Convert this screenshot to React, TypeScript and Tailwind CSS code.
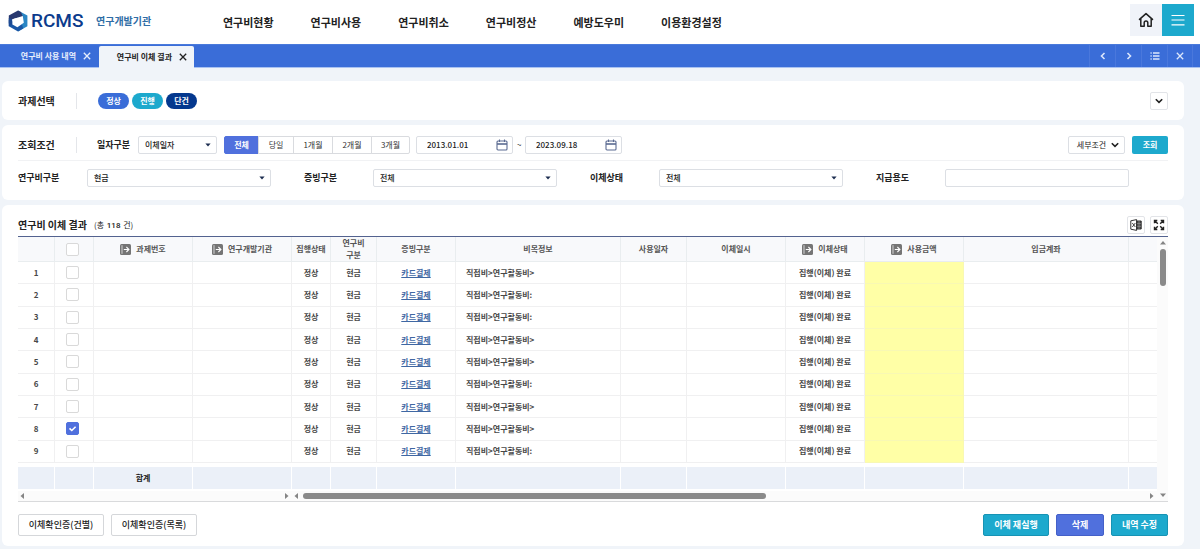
import { useState, type ReactNode } from "react";

const NAV = ["연구비현황", "연구비사용", "연구비취소", "연구비정산", "예방도우미", "이용환경설정"];
const PERIODS = ["전체", "당일", "1개월", "2개월", "3개월"];
const ITEM_TEXTS = [
  "직접비>연구활동비>",
  "직접비>연구활동비:",
  "직접비>연구활동비:",
  "직접비>연구활동비>",
  "직접비>연구활동비>",
  "직접비>연구활동비:",
  "직접비>연구활동비>",
  "직접비>연구활동비>",
  "직접비>연구활동비:",
];

function Logo() {
  return (
    <svg viewBox="0 0 20 22" className="h-[22px] w-5 shrink-0" aria-hidden="true">
      <path d="M10 0.6 19.4 5.4V16.2L10 21.4z" fill="#2a86c4" />
      <path d="M10 0.6 0.8 5.4V13.5L4.4 9.2 14.8 6.4 13 2.1z" fill="#28386f" />
      <path d="M0.8 10V16.2L10 21.4 15.2 18.5 14 14.5z" fill="#1a57a6" />
      <path d="M0.8 8 4.4 9.2V14.2L0.8 16.2z" fill="#1d4a93" />
      <path d="M4.4 9.2 14.8 6 15.8 12.8 9.4 17.2 4.4 14.4z" fill="#fff" />
    </svg>
  );
}

function Chevron({ dir, className }: { dir: "left" | "right" | "down"; className: string }) {
  const d = { left: "M6.5 2 3.5 5l3 3", right: "M3.5 2l3 3-3 3", down: "M1.8 3.2 5 6.4l3.2-3.2" }[dir];
  return (
    <svg viewBox="0 0 10 10" className={className} fill="none" stroke="currentColor" strokeWidth="1.6" aria-hidden="true">
      <path d={d} />
    </svg>
  );
}

function Cross({ className }: { className: string }) {
  return (
    <svg viewBox="0 0 10 10" className={className} fill="none" stroke="currentColor" strokeWidth="1.3" aria-hidden="true">
      <path d="M1.8 1.8l6.4 6.4M8.2 1.8 1.8 8.2" />
    </svg>
  );
}

function Triangle({ dir }: { dir: "left" | "right" | "up" | "down" }) {
  const d = { left: "M5 1v6L1.5 4z", right: "M3 1v6l3.5-3z", up: "M1 5.5h6L4 2z", down: "M1 2.5h6L4 6z" }[dir];
  return (
    <svg viewBox="0 0 8 8" className="size-2 shrink-0" aria-hidden="true">
      <path d={d} fill="#858585" />
    </svg>
  );
}

function CalendarIcon() {
  return (
    <svg viewBox="0 0 12 12" className="size-3 shrink-0" fill="none" stroke="#5b6b92" strokeWidth="1.1" aria-hidden="true">
      <rect x="1" y="2" width="10" height="9" rx="1" />
      <path d="M1 5h10" strokeWidth="1.6" />
      <path d="M3.5 0.5v2.5M8.5 0.5v2.5" />
    </svg>
  );
}

function LinkIcon() {
  return (
    <svg viewBox="0 0 11 11" className="size-[11px] shrink-0" aria-hidden="true">
      <rect width="11" height="11" rx="1.5" fill="#757575" />
      <path d="M2 1.2v8.6" stroke="#d4d4d4" strokeWidth="1" />
      <path d="M3.8 5.5h5M6.4 3l2.5 2.5L6.4 8" fill="none" stroke="#fff" strokeWidth="1.1" />
    </svg>
  );
}

function Dropdown({ label, value, className }: { label: string; value: string; className: string }) {
  return (
    <span className={`relative block ${className}`}>
      <select
        aria-label={label}
        defaultValue={value}
        className="block h-full w-full appearance-none rounded-xs border border-[#dcdfe4] bg-white pl-1.5 text-[8px] leading-[14px] font-medium text-[#222]"
      >
        <option>{value}</option>
      </select>
      <svg viewBox="0 0 6 4" className="pointer-events-none absolute top-1/2 right-1.5 h-1 w-1.5 -translate-y-1/2" aria-hidden="true">
        <path d="M0.4 0.4h5.2L3 3.6z" fill="#1c2d50" />
      </svg>
    </span>
  );
}

function DateField({ label, value }: { label: string; value: string }) {
  return (
    <label className="flex h-[18px] w-[97px] items-center rounded-xs border border-[#dcdfe4] bg-white pr-1 pl-2.5">
      <input aria-label={label} defaultValue={value} className="min-w-0 flex-1 bg-transparent text-[8px] leading-[14px] font-medium text-[#222] outline-none" />
      <CalendarIcon />
    </label>
  );
}

function Tick({ label, checked, onChange }: { label: string; checked: boolean; onChange: () => void }) {
  return (
    <span className="relative mr-auto ml-[11px] block size-[13px]">
      <input
        type="checkbox"
        aria-label={label}
        checked={checked}
        onChange={onChange}
        className="block size-[13px] appearance-none rounded-xs border border-[#d9d9d9] bg-white checked:border-[#5070dd] checked:bg-[#5070dd]"
      />
      {checked && (
        <svg viewBox="0 0 13 13" className="pointer-events-none absolute inset-0" fill="none" stroke="#fff" strokeWidth="1.6" aria-hidden="true">
          <path d="M3.5 6.3l2.3 2.2 3.8-3.8" />
        </svg>
      )}
    </span>
  );
}

function Head({ children, linked }: { children?: ReactNode; linked?: boolean }) {
  return (
    <th scope="col" className="border-r border-b border-[#e9edef] bg-[#f8f9fb] p-0 font-bold text-[#555] last:border-r-0">
      <span className="flex items-center justify-center gap-[5px]">
        {linked && <LinkIcon />}
        {children}
      </span>
    </th>
  );
}

function Cell({ children, className = "border-[#f0f0f1] text-center" }: { children?: ReactNode; className?: string }) {
  return <td className={`border-r border-b p-0 last:border-r-0 ${className}`}>{children}</td>;
}

function Panel({ children, className }: { children: ReactNode; className: string }) {
  return <section className={`rounded-md bg-white px-4 ${className}`}>{children}</section>;
}

const iconButton = "grid size-[18px] place-items-center rounded-xs border border-[#e2e4e8] bg-white text-[#222]";
const solidButton = "h-[22px] rounded-xs border text-[9px] font-bold text-white";
const barButton = "grid w-[26px] place-items-center border-l border-[#4a78dc] text-[#dbe6fb]";

export default function App() {
  const [period, setPeriod] = useState("전체");
  const [selected, setSelected] = useState<number[]>([8]);
  const toggle = (n: number) => setSelected((s) => (s.includes(n) ? s.filter((v) => v !== n) : [...s, n]));
  const all = selected.length === ITEM_TEXTS.length;

  return (
    <div className="min-h-screen bg-[#f0f4f9] font-['Noto_Sans_CJK_KR','Noto_Sans',sans-serif] text-[8px] leading-3 text-[#222]">
      <header className="flex h-11 items-center bg-white pr-1.5 pl-2">
        <a href="#home" className="flex w-[76px] items-center gap-[3px] pb-[3px] font-[Roboto,sans-serif] text-[19px] leading-6 font-medium text-[#0b3b8c]">
          <Logo />
          RCMS
        </a>
        <span className="ml-3 w-[58px] pb-[3px] text-[10px] leading-4 font-bold whitespace-nowrap text-[#2f6da6]">연구개발기관</span>
        <nav className="ml-[69px] flex flex-1 gap-[37px] text-[11px] leading-4 font-bold text-[#222]">
          {NAV.map((n) => (
            <a key={n} href="#menu" className="whitespace-nowrap">
              {n}
            </a>
          ))}
        </nav>
        <div className="flex pb-1">
          <button aria-label="홈" className="grid size-8 place-items-center bg-[#f0f3f9]">
            <svg viewBox="0 0 16 16" className="size-4" fill="none" stroke="#222" strokeWidth="1.5" strokeLinejoin="round" strokeLinecap="round" aria-hidden="true">
              <path d="M1.5 7.4 8 1.6l6.5 5.8M2.8 6.6v7.6h3.4v-3.4a1.8 1.8 0 0 1 3.6 0v3.4h3.4V6.6" />
            </svg>
          </button>
          <button aria-label="전체 메뉴" className="grid size-8 place-items-center bg-[#1da9cd]">
            <svg viewBox="0 0 14 12" className="h-3 w-3.5" stroke="#fff" strokeWidth="1.2" aria-hidden="true">
              <path d="M0.5 1.5h13M0.5 6h13M0.5 10.8h13" />
            </svg>
          </button>
        </div>
      </header>

      <div className="flex h-6 items-stretch justify-between border-t border-b border-t-[#4a7adb] border-b-[#a9c2f1] bg-[#3a6dd8] pr-[7px]">
        <div className="flex items-end">
          <div className="flex h-[22px] w-[99px] items-center justify-end gap-1.5 pr-[7px] text-[#e6eefc]">
            <a href="#tab1" className="font-bold">연구비 사용 내역</a>
            <button aria-label="연구비 사용 내역 닫기">
              <Cross className="size-2.5" />
            </button>
          </div>
          <div className="-mb-px flex h-[22px] w-[95px] items-center justify-end gap-1.5 rounded-t-xs bg-[#f0f4f9] pr-1.5 text-[#222]">
            <a href="#tab2" className="font-bold">연구비 이체 결과</a>
            <button aria-label="연구비 이체 결과 닫기">
              <Cross className="size-2.5" />
            </button>
          </div>
        </div>
        <div className="flex">
          <button aria-label="이전 탭" className={barButton}>
            <Chevron dir="left" className="size-2.5" />
          </button>
          <button aria-label="다음 탭" className={barButton}>
            <Chevron dir="right" className="size-2.5" />
          </button>
          <button aria-label="탭 목록" className={barButton}>
            <svg viewBox="0 0 10 8" className="h-2 w-2.5" stroke="currentColor" strokeWidth="1.3" aria-hidden="true">
              <path d="M0.5 1h1.2M3 1h6.5M0.5 4h1.2M3 4h6.5M0.5 7h1.2M3 7h6.5" />
            </svg>
          </button>
          <button aria-label="모든 탭 닫기" className={`${barButton} border-r`}>
            <Cross className="size-2.5" />
          </button>
        </div>
      </div>

      <main className="flex flex-col gap-[5px] pt-[13px] pr-4 pb-[3px] pl-0.5">
        <Panel className="flex h-[39px] items-center">
          <h2 className="w-[58px] text-[10px] leading-4 font-bold">과제선택</h2>
          <span className="h-4 border-l border-[#e4e6ea]" />
          <div className="ml-[21px] flex flex-1 gap-[3px] font-bold text-white">
            <span className="grid h-4 w-[31px] place-items-center rounded-full bg-[#3a6dd8]">정상</span>
            <span className="grid h-4 w-[31px] place-items-center rounded-full bg-[#1da9cd]">진행</span>
            <span className="grid h-4 w-[31px] place-items-center rounded-full bg-[#04388e]">단건</span>
          </div>
          <button aria-label="과제 펼치기" className={iconButton}>
            <Chevron dir="down" className="size-2.5" />
          </button>
        </Panel>

        <Panel className="pt-[11px] pb-[13px]">
          <div className="flex items-center border-b border-[#f1f2f4] pb-[6px]">
            <h2 className="w-[58px] text-[10px] leading-4 font-bold">조회조건</h2>
            <span className="h-4 border-l border-[#e4e6ea]" />
            <span className="ml-5 w-[41px] text-[9px] leading-4 font-bold">일자구분</span>
            <Dropdown label="일자구분" value="이체일자" className="h-[18px] w-[79px]" />
            <div className="ml-[7px] flex">
              {PERIODS.map((p) => (
                <button
                  key={p}
                  aria-pressed={p === period}
                  onClick={() => setPeriod(p)}
                  className={`-mr-px h-[18px] w-10 border first:w-[35px] first:rounded-l-xs last:mr-0 last:w-[39px] last:rounded-r-xs nth-2:w-9 ${
                    p === period ? "border-[#5070dd] bg-[#5070dd] font-bold text-white" : "border-[#d9dbdf] bg-white text-[#333]"
                  }`}
                >
                  {p}
                </button>
              ))}
            </div>
            <div className="ml-1.5 flex flex-1 items-center gap-1">
              <DateField label="시작일" value="2013.01.01" />
              <span className="w-1 text-center">~</span>
              <DateField label="종료일" value="2023.09.18" />
            </div>
            <button className="flex h-[18px] w-[57px] items-center justify-center gap-1 rounded-xs border border-[#dcdfe4] bg-white pl-1">
              세부조건
              <Chevron dir="down" className="size-2.5" />
            </button>
            <button className="ml-[7px] h-[18px] w-9 rounded-xs bg-[#1da9cd] font-bold text-white">조회</button>
          </div>
          <div className="mt-2 grid grid-cols-4 pr-1.5">
            {[
              ["연구비구분", "현금"],
              ["증빙구분", "전체"],
              ["이체상태", "전체"],
              ["지급용도", ""],
            ].map(([label, value]) => (
              <div key={label} className="flex items-center pr-[33px]">
                <span className="w-[69px] text-[9px] leading-4 font-bold">{label}</span>
                {value ? (
                  <Dropdown label={label} value={value} className="h-[18px] flex-1" />
                ) : (
                  <input aria-label={label} className="h-[18px] min-w-0 flex-1 rounded-xs border border-[#dcdfe4] bg-white px-1.5" />
                )}
              </div>
            ))}
          </div>
        </Panel>

        <Panel className="pt-[11px] pb-2.5">
          <div className="flex items-center gap-[5px] pb-0.5">
            <h2 className="text-[10px] leading-4 font-bold">연구비 이체 결과</h2>
            <span className="flex-1 pl-0.5">
              (총 <b className="mx-px font-['Roboto',sans-serif] font-medium">118</b> 건)
            </span>
            <button aria-label="엑셀 다운로드" className={iconButton}>
              <svg viewBox="0 0 12 12" className="size-3" fill="none" stroke="#333" aria-hidden="true">
                <path d="M0.8 1.8 6.6 0.6v10.8L0.8 10.2z" />
                <path d="M2.3 4l3 4M5.3 4l-3 4" strokeWidth="0.9" />
                <path d="M6.6 2h4.6v8H6.6z" fill="#444" />
                <path d="M9 2v8M7 4.6h4M7 7.3h4" stroke="#ccc" strokeWidth="0.4" />
              </svg>
            </button>
            <button aria-label="전체 화면" className={iconButton}>
              <svg viewBox="0 0 12 12" className="size-3" fill="none" stroke="#222" strokeWidth="1.4" aria-hidden="true">
                <path d="M1.5 4.3V1.5h2.8M1.5 1.5l3.3 3.3M7.7 1.5h2.8v2.8M10.5 1.5 7.2 4.8M1.5 7.7v2.8h2.8M1.5 10.5l3.3-3.3M7.7 10.5h2.8V7.7M10.5 10.5 7.2 7.2" />
              </svg>
            </button>
          </div>

          <div className="flex border-t border-b border-t-[#53628f] border-b-[#d9dadc]">
            <div className="min-w-0 flex-1">
              <table className="h-[252px] w-full table-fixed border-separate border-spacing-0 font-bold text-[#484848]">
                <colgroup>
                  <col className="w-[37px]" />
                  <col className="w-[39px]" />
                  <col className="w-[99px]" />
                  <col className="w-[99px]" />
                  <col className="w-[39px]" />
                  <col className="w-[46px]" />
                  <col className="w-[79px]" />
                  <col className="w-[165px]" />
                  <col className="w-[66px]" />
                  <col className="w-[99px]" />
                  <col className="w-[79px]" />
                  <col className="w-[99px]" />
                  <col className="w-[165px]" />
                  <col />
                </colgroup>
                <thead>
                  <tr className="h-[25px]">
                    <Head />
                    <Head>
                      <Tick label="전체 선택" checked={all} onChange={() => setSelected(all ? [] : ITEM_TEXTS.map((_, i) => i + 1))} />
                    </Head>
                    <Head linked>과제번호</Head>
                    <Head linked>연구개발기관</Head>
                    <Head>집행상태</Head>
                    <Head>
                      <span>
                        연구비
                        <br />
                        구분
                      </span>
                    </Head>
                    <Head>증빙구분</Head>
                    <Head>비목정보</Head>
                    <Head>사용일자</Head>
                    <Head>이체일시</Head>
                    <Head linked>이체상태</Head>
                    <Head linked>사용금액</Head>
                    <Head>입금계좌</Head>
                    <Head />
                  </tr>
                </thead>
                <tbody>
                  {ITEM_TEXTS.map((text, i) => (
                    <tr key={i}>
                      <Cell>{i + 1}</Cell>
                      <Cell>
                        <Tick label={`${i + 1}행 선택`} checked={selected.includes(i + 1)} onChange={() => toggle(i + 1)} />
                      </Cell>
                      <Cell />
                      <Cell />
                      <Cell>정상</Cell>
                      <Cell>현금</Cell>
                      <Cell>
                        <a href="#receipt" className="text-[#3f67a3] underline">
                          카드결제
                        </a>
                      </Cell>
                      <Cell className="border-[#f0f0f1] pl-2.5! text-left">{text}</Cell>
                      <Cell />
                      <Cell />
                      <Cell>집행(이체) 완료</Cell>
                      <Cell className="border-[#f8f8b4] bg-[#ffffa6]" />
                      <Cell />
                      <Cell />
                    </tr>
                  ))}
                </tbody>
                <tfoot>
                  <tr className="h-[26px]">
                    {Array.from({ length: 14 }, (_, i) => (
                      <td key={i} className="border-t-4 border-r border-white bg-[#ebf0f8] p-0 text-center font-bold text-[#222] last:border-r-0">
                        {i === 2 ? "합계" : ""}
                      </td>
                    ))}
                  </tr>
                </tfoot>
              </table>
              <div className="mt-0.5 flex h-2.5 bg-[#fbfbfb]">
                <div className="flex w-[273px] items-center justify-between px-px">
                  <Triangle dir="left" />
                  <Triangle dir="right" />
                </div>
                <div className="flex flex-1 items-center gap-0.5 px-0.5">
                  <Triangle dir="left" />
                  <div className="flex-1">
                    <div className="h-1.5 w-[55%] rounded-full bg-[#8a8a8a]" />
                  </div>
                  <Triangle dir="right" />
                </div>
              </div>
            </div>
            <div className="flex w-[11px] flex-col items-center bg-[#fbfbfb] pt-0.5 pb-0.5">
              <Triangle dir="up" />
              <div className="w-1.5 flex-1 pt-0.5">
                <div className="h-[37px] rounded-full bg-[#8a8a8a]" />
              </div>
              <Triangle dir="down" />
            </div>
          </div>

          <div className="mt-3 flex gap-[7px] text-[9px]">
            <button className="h-[22px] w-[86px] rounded-xs border border-[#d5d7da] bg-white font-medium text-[#222]">이체확인증(건별)</button>
            <button className="h-[22px] w-[86px] rounded-xs border border-[#d5d7da] bg-white font-medium text-[#222]">이체확인증(목록)</button>
            <span className="flex-1" />
            <button className={`${solidButton} w-[66px] border-[#1793b4] bg-[#1da9cd]`}>이체 재실행</button>
            <button className={`${solidButton} w-12 border-[#4460c8] bg-[#5070dd]`}>삭제</button>
            <button className={`${solidButton} w-[57px] border-[#1793b4] bg-[#1da9cd]`}>내역 수정</button>
          </div>
        </Panel>
      </main>
    </div>
  );
}
